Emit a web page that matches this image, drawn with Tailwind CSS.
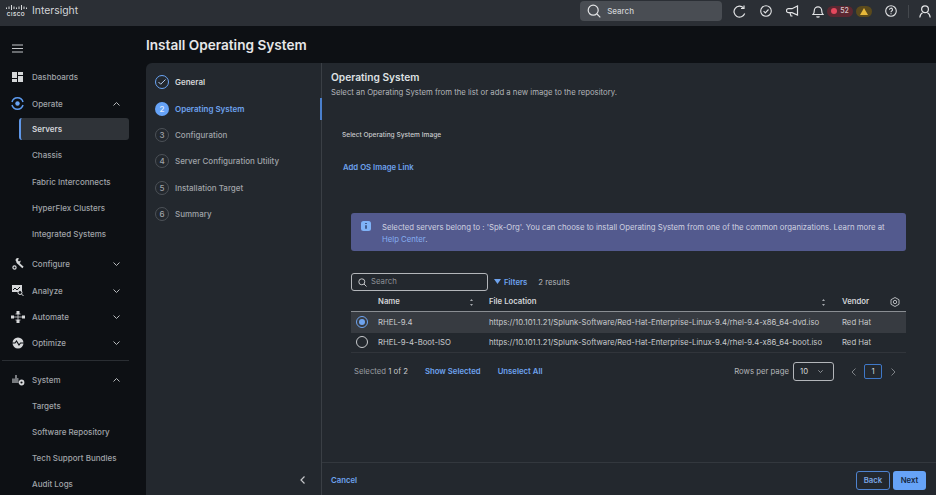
<!DOCTYPE html>
<html lang="en">
<head>
<meta charset="UTF-8">
<title>Install Operating System</title>
<script src="https://cdn.jsdelivr.net/npm/@tailwindcss/browser@4"></script>
</head>
<body class="bg-[#0d1014] font-['Inter',sans-serif] text-[8px] font-medium text-[#a0a4a9] w-[936px] h-[495px] overflow-hidden">
  <!-- Top bar -->
  <header class="h-[26px] pb-[4px] bg-[#2b2f35] flex items-center">
    <div class="w-[26px] ml-[3px] flex flex-col items-center leading-none">
      <svg width="21" height="6" viewBox="0 0 21 6" stroke="#d8dadc" stroke-width="1" fill="none"><path d="M.5 2.500v1.500M3 1.500v2.500M5.500 0v5M8 1.500v2.500M10.500 2.500v1.500M13 1.500v2.500M15.500 0v5M18 1.500v2.500M20.500 2.500v1.500"/></svg>
      <span class="text-[5px] font-bold text-[#d8dadc] tracking-[0.5px] mt-[1px]">CISCO</span>
    </div>
    <span class="ml-[3px] text-[10.400px] font-normal text-[#d2d4d7]">Intersight</span>
    <div class="ml-[502px] w-[142px] h-[20px] rounded-[4px] bg-[#494d53] flex items-center pl-[7px] gap-[6px] text-[#cfd1d4]">
      <svg width="14" height="14" viewBox="0 0 14 14" fill="none" stroke="#e2e3e5" stroke-width="1.200"><circle cx="6.200" cy="6.200" r="5"/><path d="M10 10l3.300 3.300"/></svg>
      <span class="text-[8px]">Search</span>
    </div>
    <svg class="ml-[11px]" width="13" height="13" viewBox="0 0 13 13" fill="none" stroke="#e2e3e5" stroke-width="1.200"><path d="M11.700 8.500A5.500 5.500 0 1 1 10.500 2.800"/><path d="M11 .5v3H8"/></svg>
    <svg class="ml-[14px]" width="12" height="12" viewBox="0 0 12 12" fill="none" stroke="#e2e3e5" stroke-width="1.100"><circle cx="6" cy="6" r="5.300"/><path d="M3.600 6.200l1.700 1.700 3.200-3.400"/></svg>
    <svg class="ml-[14px]" width="13" height="12" viewBox="0 0 13 12" fill="none" stroke="#e2e3e5" stroke-width="1.200"><path d="M11.500 1v9L6 7.700H2.500a1.500 1.500 0 0 1 0-4H6z"/><path d="M4 8l1 3h1.500"/></svg>
    <svg class="ml-[13px]" width="12" height="13" viewBox="0 0 12 13" fill="none" stroke="#e2e3e5" stroke-width="1.200"><path d="M1 9.500c1-1 1.300-1.800 1.300-4a3.700 3.700 0 0 1 7.400 0c0 2.200.3 3 1.300 4z"/><path d="M4.500 11.500c.7.800 2.300.8 3 0"/></svg>
    <div class="ml-[3px] w-[26px] h-[11px] rounded-full bg-[#5c2731] flex items-center justify-center gap-[3px] text-[7px] text-[#d9c9cc]">
      <span class="w-[6px] h-[6px] rounded-full bg-[#e5485d]"></span><span>52</span>
    </div>
    <div class="ml-[3px] w-[16px] h-[11px] rounded-full bg-[#5b4a1c] flex items-center justify-center">
      <svg width="8" height="7" viewBox="0 0 8 7"><path d="M4 0l4 7H0z" fill="#e8b93a"/></svg>
    </div>
    <svg class="ml-[13px]" width="12" height="12" viewBox="0 0 12 12" fill="none" stroke="#e2e3e5" stroke-width="1.100"><circle cx="6" cy="6" r="5.300"/><path d="M4.500 4.700a1.500 1.500 0 1 1 2.200 1.300c-.5.300-.7.600-.7 1.200M6 8.300v.9"/></svg>
    <div class="ml-[11px] w-px h-[13px] bg-[#44484d]"></div>
    <svg class="ml-[10px]" width="12" height="13" viewBox="0 0 12 13" fill="none" stroke="#e2e3e5" stroke-width="1.200"><circle cx="6" cy="4.200" r="3.400"/><path d="M.8 12.500c.4-3 2-4.500 2.800-4.800M11.200 12.500c-.4-3-2-4.500-2.800-4.800"/></svg>
  </header>

  <div class="flex h-[469px]">
    <!-- Sidebar -->
    <aside class="w-[146px] shrink-0 relative">
      <svg class="ml-[12px] mt-[18px]" width="12" height="10" viewBox="0 0 12 10" stroke="#c4c6c9" stroke-width="1.200"><path d="M0 1h11M0 4.500h11M0 8h11"/></svg>
      <nav class="mt-[10px] flex flex-col">
        <div class="h-[26px] flex items-center">
          <svg class="ml-[12px] w-[11px]" height="10" viewBox="0 0 11 10" fill="#d5d7d9"><path d="M0 0h5v6H0zM6 0h5v3H6zM0 7h5v3H0zM6 4h5v6H6z"/></svg>
          <span class="ml-[9px]">Dashboards</span>
        </div>
        <div class="h-[27px] flex items-center">
          <svg class="ml-[11px]" width="13" height="13" viewBox="0 0 13 13" fill="none"><circle cx="6.500" cy="6.500" r="2.200" fill="#6aa5f5"/><path d="M1 5A5.700 5.700 0 0 1 12 5M1 8a5.700 5.700 0 0 0 11 0" stroke="#5d9bf0" stroke-width="1.500"/></svg>
          <span class="ml-[8px]">Operate</span>
          <svg class="ml-auto mr-[26px]" width="7" height="4" viewBox="0 0 7 4" fill="none" stroke="#b5b8bb"><path d="M.5 3.500L3.500.5l3 3"/></svg>
        </div>
        <div class="h-[22px] w-[110px] ml-[19px] mt-[1px] bg-[#2f3338] rounded-[3px] border-l-[2px] border-[#5f97e8] flex items-center pl-[11px] text-[#d3d5d8] font-semibold">Servers</div>
        <div class="h-[26px] mt-[2px] flex items-center pl-[32px]">Chassis</div>
        <div class="h-[27px] flex items-center pl-[32px]">Fabric Interconnects</div>
        <div class="h-[26px] flex items-center pl-[32px]">HyperFlex Clusters</div>
        <div class="h-[26px] flex items-center pl-[32px]">Integrated Systems</div>
        <div class="h-[26px] mt-[4px] flex items-center">
          <svg class="ml-[12px]" width="12" height="12" viewBox="0 0 12 12" fill="none" stroke="#d5d7d9"><circle cx="2.500" cy="9.500" r="1.600" stroke-width="1.200"/><path d="M5 4l6 5.500" stroke-width="1.800"/><path d="M3.500 2.200A2.200 2.200 0 0 1 7 .5L5.800 2.200 7 3.500l1.500-1A2.300 2.300 0 0 1 5 5z" fill="#d5d7d9" stroke="none"/></svg>
          <span class="ml-[8px]">Configure</span>
          <svg class="ml-auto mr-[26px]" width="7" height="4" viewBox="0 0 7 4" fill="none" stroke="#b5b8bb"><path d="M.5.5l3 3 3-3"/></svg>
        </div>
        <div class="h-[27px] flex items-center">
          <svg class="ml-[12px]" width="12" height="11" viewBox="0 0 12 11" fill="none"><path d="M0 0h10v7H0z" fill="#d5d7d9"/><path d="M1 5l2-2 2 2 3-3" stroke="#0d1014"/><circle cx="8" cy="7.500" r="2" stroke="#d5d7d9" fill="#0d1014"/><path d="M9.500 9l2 2" stroke="#d5d7d9"/></svg>
          <span class="ml-[8px]">Analyze</span>
          <svg class="ml-auto mr-[26px]" width="7" height="4" viewBox="0 0 7 4" fill="none" stroke="#b5b8bb"><path d="M.5.5l3 3 3-3"/></svg>
        </div>
        <div class="h-[26px] flex items-center">
          <svg class="ml-[11px]" width="14" height="12" viewBox="0 0 14 12" fill="none" stroke="#d5d7d9" stroke-width=".8"><path d="M7 2v8M3 6h8M4.500 3h5M4.500 9h5"/><g fill="#d5d7d9" stroke="none"><rect x="5.500" width="3" height="3"/><rect y="4.500" width="3" height="3"/><rect x="11" y="4.500" width="3" height="3"/><rect x="5.500" y="9" width="3" height="3"/></g></svg>
          <span class="ml-[7px]">Automate</span>
          <svg class="ml-auto mr-[26px]" width="7" height="4" viewBox="0 0 7 4" fill="none" stroke="#b5b8bb"><path d="M.5.5l3 3 3-3"/></svg>
        </div>
        <div class="h-[26px] flex items-center">
          <svg class="ml-[12px]" width="12" height="12" viewBox="0 0 12 12"><circle cx="6" cy="6" r="5.500" fill="#d5d7d9"/><path d="M0 6h3l1.500-2 2.500 4 1.500-2H12" fill="none" stroke="#0d1014" stroke-width="1.100"/></svg>
          <span class="ml-[8px]">Optimize</span>
          <svg class="ml-auto mr-[26px]" width="7" height="4" viewBox="0 0 7 4" fill="none" stroke="#b5b8bb"><path d="M.5.5l3 3 3-3"/></svg>
        </div>
        <div class="h-px w-[127px] ml-[2px] mt-[4px] bg-[#2a2e33]"></div>
        <div class="h-[26px] mt-[6px] flex items-center">
          <svg class="ml-[12px]" width="13" height="11" viewBox="0 0 13 11"><path d="M3 0h2v3h1.500v5H0V3.500h3z" fill="#777a7e"/><circle cx="9.500" cy="7.500" r="2" fill="none" stroke="#d5d7d9" stroke-width="1.800"/></svg>
          <span class="ml-[7px]">System</span>
          <svg class="ml-auto mr-[26px]" width="7" height="4" viewBox="0 0 7 4" fill="none" stroke="#b5b8bb"><path d="M.5 3.500L3.500.5l3 3"/></svg>
        </div>
        <div class="h-[26px] flex items-center pl-[32px]">Targets</div>
        <div class="h-[26px] flex items-center pl-[32px]">Software Repository</div>
        <div class="h-[26px] flex items-center pl-[32px]">Tech Support Bundles</div>
        <div class="h-[26px] flex items-center pl-[32px]">Audit Logs</div>
      </nav>
    </aside>

    <!-- Main -->
    <main class="flex-1 flex flex-col min-w-0">
      <h1 class="h-[37px] pt-[9px] text-[13.600px] leading-[20px] font-semibold text-[#e6e7e9]">Install Operating System</h1>
      <div class="flex-1 flex bg-[#23282e] rounded-tl-[6px] min-h-0">
        <!-- Stepper -->
        <section class="w-[176px] shrink-0 border-r border-[#3a3f45] flex flex-col pt-[6px] pl-[9px] relative">
          <div class="h-[26.400px] flex items-center gap-[6px] text-[#d3d5d8] font-semibold">
            <span class="w-[14px] h-[14px] rounded-full border border-[#6aa5f5] flex items-center justify-center">
              <svg width="8" height="6" viewBox="0 0 8 6" fill="none" stroke="#b6cdee"><path d="M.5 3l2.200 2.200L7.500.5"/></svg>
            </span>General
          </div>
          <div class="h-[26.400px] flex items-center gap-[6px] text-[#6ea3ee] font-semibold">
            <span class="w-[14px] h-[14px] rounded-full bg-[#66a3f7] flex items-center justify-center text-[8px] text-[#dfeafb]">2</span>Operating System
          </div>
          <div class="h-[26.400px] flex items-center gap-[6px]">
            <span class="w-[14px] h-[14px] rounded-full border border-[#4c5157] flex items-center justify-center text-[8px]">3</span>Configuration
          </div>
          <div class="h-[26.400px] flex items-center gap-[6px]">
            <span class="w-[14px] h-[14px] rounded-full border border-[#4c5157] flex items-center justify-center text-[8px]">4</span>Server Configuration Utility
          </div>
          <div class="h-[26.400px] flex items-center gap-[6px]">
            <span class="w-[14px] h-[14px] rounded-full border border-[#4c5157] flex items-center justify-center text-[8px]">5</span>Installation Target
          </div>
          <div class="h-[26.400px] flex items-center gap-[6px]">
            <span class="w-[14px] h-[14px] rounded-full border border-[#4c5157] flex items-center justify-center text-[8px]">6</span>Summary
          </div>
          <span class="absolute right-[-1px] top-[35px] w-[2px] h-[22px] bg-[#4a7fcc]"></span>
          <svg class="absolute right-[16px] bottom-[11px]" width="5" height="8" viewBox="0 0 5 8" fill="none" stroke="#c4c6c9" stroke-width="1.200"><path d="M4.500.5L1 4l3.500 3.500"/></svg>
        </section>

        <!-- Content -->
        <section class="flex-1 flex flex-col min-w-0">
          <div class="flex-1 pl-[9px] pr-[30px] min-h-0">
            <h2 class="mt-[7px] text-[10.200px] leading-[14px] font-semibold text-[#dfe1e3]">Operating System</h2>
            <p class="mt-[1px] text-[7.750px] leading-[14px] font-normal text-[#b3b6ba]">Select an Operating System from the list or add a new image to the repository.</p>
            <div class="mt-[31px] ml-[11px] text-[6.600px] leading-[10px] text-[#c8cacd]">Select Operating System Image</div>
            <div class="mt-[21px] ml-[12px] text-[7.750px] leading-[12px] font-semibold text-[#6ea3ee]">Add OS Image Link</div>
            <!-- Info banner -->
            <div class="mt-[40px] ml-[20px] w-[555px] h-[38px] bg-[#535a8e] rounded-[3px] flex pl-[10px] pt-[8px]">
              <svg class="shrink-0" width="10" height="10" viewBox="0 0 10 10"><rect width="10" height="10" rx="2.500" fill="#7fb2f7"/><path d="M5 2v1M5 4.300v3.500" stroke="#23305a" stroke-width="1.300"/></svg>
              <p class="ml-[11px] text-[7.750px] leading-[12px] font-normal text-[#d0d2e0] whitespace-nowrap">Selected servers belong to : 'Spk-Org'. You can choose to install Operating System from one of the common organizations. Learn more at<br><span class="text-[#85aef0]">Help Center</span>.</p>
            </div>
            <!-- Table toolbar -->
            <div class="mt-[22px] ml-[20px] flex items-center h-[18px]">
              <div class="w-[137px] h-[18px] rounded-[3px] border border-[#b3b6ba] flex items-center pl-[6px] gap-[4px] font-normal text-[7.750px]">
                <svg width="9" height="9" viewBox="0 0 9 9" fill="none" stroke="#c4c6c9"><circle cx="3.800" cy="3.800" r="3"/><path d="M6 6l2.500 2.500"/></svg>
                <span class="text-[#8d9196]">Search</span>
              </div>
              <svg class="ml-[6px] mb-[2px]" width="7" height="5" viewBox="0 0 7 5"><path d="M0 0h7L3.500 5z" fill="#6ea3ee"/></svg>
              <span class="ml-[3px] pt-[1px] text-[#6ea3ee] font-semibold text-[7.750px]">Filters</span>
              <span class="ml-[11px] pt-[1px] font-normal text-[#b3b6ba] text-[7.750px]">2 results</span>
            </div>
            <!-- Table -->
            <div class="ml-[20px] w-[555px] mt-[1px]">
              <div class="h-[20px] pt-[1px] flex items-center border-b-[1.500px] border-[#8a8e93] text-[7.750px] font-semibold text-[#d3d5d8]">
                <span class="ml-[27px] w-[92px]">Name</span>
                <svg width="3" height="7" viewBox="0 0 3 7" fill="#a4a8ad"><path d="M1.500 0l1.500 2H0zM1.500 7L0 5h3z"/></svg>
                <span class="ml-[16px] w-[333px]">File Location</span>
                <svg width="3" height="7" viewBox="0 0 3 7" fill="#a4a8ad"><path d="M1.500 0l1.500 2H0zM1.500 7L0 5h3z"/></svg>
                <span class="ml-[17px]">Vendor</span>
                <svg class="ml-auto mr-[6px]" width="10" height="10" viewBox="0 0 10 10" fill="none" stroke="#b3b6ba"><path d="M5 .5l4 2.200v4.600L5 9.500 1 7.300V2.700z"/><circle cx="5" cy="5" r="1.700"/></svg>
              </div>
              <div class="h-[21px] flex items-center bg-[#373b41] font-normal text-[7.750px] text-[#c8cacd]">
                <span class="ml-[5px] mb-[1px] w-[12px] h-[12px] rounded-full border-[1.500px] border-[#6ea3ee] flex items-center justify-center"><span class="w-[6px] h-[6px] rounded-full bg-[#6ea3ee]"></span></span>
                <span class="ml-[10px] w-[111px]">RHEL-9.4</span>
                <span class="w-[353px] whitespace-nowrap">https://10.101.1.21/Splunk-Software/Red-Hat-Enterprise-Linux-9.4/rhel-9.4-x86_64-dvd.iso</span>
                <span>Red Hat</span>
              </div>
              <div class="h-[20px] flex items-center border-b border-[#31353b] font-normal text-[7.750px] text-[#c8cacd]">
                <span class="ml-[5px] mb-[1px] w-[12px] h-[12px] rounded-full border-[1.500px] border-[#c8cacd]"></span>
                <span class="ml-[10px] w-[111px]">RHEL-9-4-Boot-ISO</span>
                <span class="w-[353px] whitespace-nowrap">https://10.101.1.21/Splunk-Software/Red-Hat-Enterprise-Linux-9.4/rhel-9.4-x86_64-boot.iso</span>
                <span>Red Hat</span>
              </div>
            </div>
            <!-- Pagination -->
            <div class="ml-[23px] w-[552px] mt-[9px] h-[19px] flex items-center text-[7.750px] font-normal">
              <span class="text-[#9a9da1]">Selected <span class="text-[#c8cacd]">1 of 2</span></span>
              <span class="ml-[17px] text-[#6ea3ee] font-semibold">Show Selected</span>
              <span class="ml-[17px] text-[#6ea3ee] font-semibold">Unselect All</span>
              <span class="ml-auto text-[#b3b6ba]">Rows per page</span>
              <div class="ml-[4px] w-[41px] h-[19px] rounded-[3px] border border-[#b3b6ba] flex items-center pl-[6px] gap-[10px] text-[#d3d5d8]">10
                <svg width="5" height="3" viewBox="0 0 5 3" fill="none" stroke="#a4a8ad" stroke-width=".8"><path d="M.3.3l2.200 2.200L4.700.3"/></svg>
              </div>
              <svg class="ml-[17px]" width="5" height="8" viewBox="0 0 5 8" fill="none" stroke="#7d8186"><path d="M4.500.5L1 4l3.500 3.500"/></svg>
              <div class="ml-[8px] w-[18px] h-[15px] rounded-[2px] border border-[#3f78c8] flex items-center justify-center text-[#d3d5d8]">1</div>
              <svg class="ml-[9px] mr-[10px]" width="5" height="8" viewBox="0 0 5 8" fill="none" stroke="#7d8186"><path d="M.5.5L4 4 .5 7.500"/></svg>
            </div>
          </div>
          <!-- Footer -->
          <footer class="h-[33px] pt-[3px] shrink-0 border-t border-[#33383e] flex items-center pl-[9px] pr-[10px]">
            <span class="text-[#6ea3ee] font-semibold text-[7.750px]">Cancel</span>
            <div class="ml-auto flex gap-[3px]">
              <span class="w-[34px] h-[19px] rounded-[3px] border border-[#4f83cf] flex items-center justify-center text-[7.750px] font-semibold text-[#7ba6e4]">Back</span>
              <span class="w-[33px] h-[19px] rounded-[3px] bg-[#66a3f7] flex items-center justify-center text-[7.750px] font-semibold text-[#14263f]">Next</span>
            </div>
          </footer>
        </section>
      </div>
    </main>
  </div>
</body>
</html>
